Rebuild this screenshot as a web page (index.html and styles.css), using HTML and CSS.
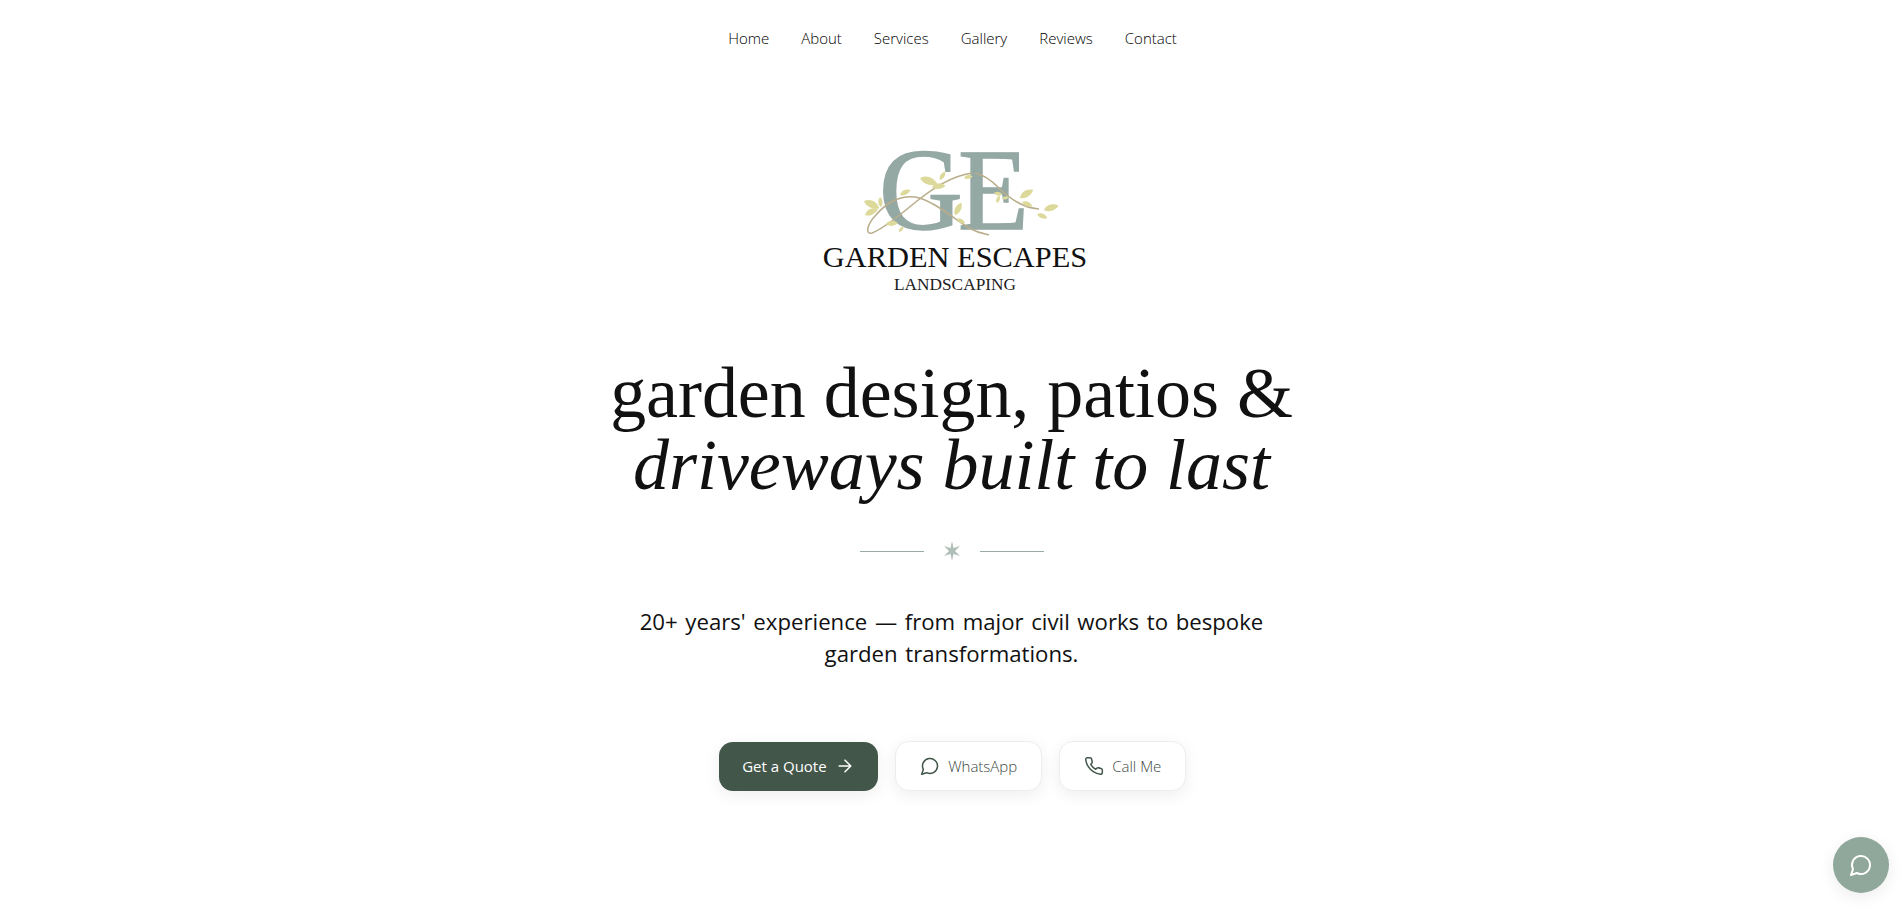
FILE: index.html
```html
<!DOCTYPE html>
<html lang="en">
<head>
<meta charset="utf-8">
<title>Garden Escapes Landscaping</title>
<link rel="stylesheet" href="styles.css">
</head>
<body>
<nav class="nav">
  <a href="#">Home</a><a href="#">About</a><a href="#">Services</a><a href="#">Gallery</a><a href="#">Reviews</a><a href="#">Contact</a>
</nav>
<main class="hero">
  <svg class="logo" viewBox="0 0 300 170" width="300" height="170" role="img" aria-label="Garden Escapes Landscaping">
    <defs>
      <path id="leaf" d="M0 0C5-6 14-6 20 0C14 5 5 5 0 0Z"/>
    </defs>
    <text class="mono" x="77" y="94" letter-spacing="-4.700">GE</text>
    <g class="vine">
      <path d="M170 38C150 41 132 52 110 70C92 85 78 95 70 98C62 100 66 88 74 80C84 68 98 60 113 62C130 65 150 82 167 93C176 98 182 99 187 100"/>
      <path d="M173 38C183 40 190 46 197 53C208 64 222 73 237 74"/>
    </g>
    <g class="leaves">
      <use href="#leaf" transform="translate(62 66) rotate(25) scale(.85)"/>
      <use href="#leaf" transform="translate(79 72) rotate(-95) scale(.5)"/>
      <use href="#leaf" transform="translate(63 80) rotate(-25) scale(.72)"/>
      <use href="#leaf" transform="translate(84 89) rotate(-5) scale(.6)"/>
      <use href="#leaf" transform="translate(97 97) rotate(-50) scale(.36)"/>
      <use href="#leaf" transform="translate(118 43) rotate(20) scale(.92)"/>
      <use href="#leaf" transform="translate(138 45) rotate(-58) scale(.5)"/>
      <use href="#leaf" transform="translate(130 52) rotate(-5) scale(.68)"/>
      <use href="#leaf" transform="translate(98 60) rotate(-25) scale(.58)"/>
      <use href="#leaf" transform="translate(153 80) rotate(-62) scale(.7)"/>
      <use href="#leaf" transform="translate(155 84) rotate(28) scale(.46)"/>
      <use href="#leaf" transform="translate(162 43) rotate(-12) scale(.44)"/>
      <use href="#leaf" transform="translate(192 58) rotate(12) scale(.44)"/>
      <use href="#leaf" transform="translate(195 68) rotate(-72) scale(.4)"/>
      <use href="#leaf" transform="translate(200 64) rotate(-15) scale(.36)"/>
      <use href="#leaf" transform="translate(218 63) rotate(-32) scale(.78)"/>
      <use href="#leaf" transform="translate(220 67) rotate(22) scale(.56)"/>
      <use href="#leaf" transform="translate(242 75) rotate(-16) scale(.76)"/>
      <use href="#leaf" transform="translate(235 79) rotate(22) scale(.56)"/>
    </g>
    <text class="brand" x="153" y="132" text-anchor="middle">GARDEN ESCAPES</text>
    <text class="sub-brand" x="153" y="155" text-anchor="middle">LANDSCAPING</text>
  </svg>
  <h1 class="title">garden design, patios &amp;<br><em>driveways built to last</em></h1>
  <div class="divider">
    <span class="rule"></span>
    <svg class="star" viewBox="0 0 20 20" width="20" height="20"><path d="M10 0L11.500 7 18 5 13 10 18 15 11.500 13 10 20 8.500 13 2 15 7 10 2 5 8.500 7Z"/></svg>
    <span class="rule"></span>
  </div>
  <p class="lead">20+ years' experience — from major civil works to bespoke garden transformations.</p>
  <div class="actions">
    <a class="btn primary" href="#">Get a Quote
      <svg class="icon" viewBox="0 0 24 24"><path d="M5 12h14M12 5l7 7-7 7"/></svg>
    </a>
    <a class="btn ghost" href="#">
      <svg class="icon" viewBox="0 0 24 24"><path d="M7.900 20A9 9 0 1 0 4 16.100L2 22Z"/></svg>
      WhatsApp
    </a>
    <a class="btn ghost" href="#">
      <svg class="icon" viewBox="0 0 24 24"><path d="M22 16.920v3a2 2 0 0 1-2.180 2 19.790 19.790 0 0 1-8.630-3.070 19.500 19.500 0 0 1-6-6 19.790 19.790 0 0 1-3.070-8.670A2 2 0 0 1 4.110 2h3a2 2 0 0 1 2 1.720 12.840 12.840 0 0 0 .7 2.810 2 2 0 0 1-.45 2.110L8.090 9.910a16 16 0 0 0 6 6l1.270-1.270a2 2 0 0 1 2.110-.45 12.840 12.840 0 0 0 2.810.7A2 2 0 0 1 22 16.920Z"/></svg>
      Call Me
    </a>
  </div>
</main>
<button class="chat" type="button" aria-label="Open chat">
  <svg viewBox="0 0 24 24" width="24" height="24"><path d="M7.900 20A9 9 0 1 0 4 16.100L2 22Z"/></svg>
</button>
</body>
</html>
```

FILE: styles.css
```css
* { box-sizing: border-box; }
html, body { margin: 0; height: 100%; }
body {
  background: #fff;
  color: #111;
  font-family: "Open Sans", "Liberation Sans", sans-serif;
  overflow: hidden;
}
a { text-decoration: none; color: inherit; }

.nav {
  display: flex;
  justify-content: center;
  gap: 32px;
  padding: 27px 0 0 2px;
  height: 135px;
  font-size: 15px;
  line-height: 22px;
  font-weight: 300;
  color: #000;
}

.hero {
  display: flex;
  flex-direction: column;
  align-items: center;
}

.logo { display: block; overflow: visible; }
.mono { font-family: "Liberation Serif", serif; font-size: 116px; fill: #94a8a4; stroke: #94a8a4; stroke-width: 1.400; }
.vine path { fill: none; stroke: #b9ad8c; stroke-width: 1.600; }
.leaves { fill: #dcd99a; }
.brand { font-family: "Liberation Serif", serif; font-size: 30.400px; fill: #111; }
.sub-brand { font-family: "Liberation Serif", serif; font-size: 17.300px; fill: #222; }

.title {
  margin: 52px 0 0;
  font-family: "Liberation Serif", serif;
  font-size: 72px;
  line-height: 72px;
  font-weight: 400;
  text-align: center;
  color: #111;
  letter-spacing: -.05px;
}
.title em { font-style: italic; }

.divider {
  display: flex;
  align-items: center;
  gap: 18px;
  margin-top: 40px;
  height: 20px;
}
.rule { width: 64px; height: 1px; background: #9aaba3; }
.star { fill: #b0c0b8; }

.lead {
  margin: 45px 0 0;
  width: 672px;
  font-size: 22.200px;
  word-spacing: 1.850px;
  line-height: 32px;
  text-align: center;
  color: #111;
}

.actions {
  display: flex;
  align-items: center;
  gap: 17px;
  margin-top: 71px;
  padding-left: 2px;
}
.btn {
  display: flex;
  align-items: center;
  justify-content: center;
  gap: 8px;
  height: 50px;
  padding: 0 24px;
  border-radius: 14px;
  font-size: 15px;
  font-weight: 300;
  box-shadow: 0 4px 16px rgba(0, 0, 0, .07);
}
.primary { background: #43564a; color: #fff; height: 49px; font-weight: 400; padding: 0 23.500px; }
.ghost { background: #fff; border: 1px solid #eceeed; color: #3d4a43; }
.icon { width: 20px; height: 20px; fill: none; stroke: currentColor; stroke-width: 1.800; stroke-linecap: round; stroke-linejoin: round; }
.ghost .icon { stroke: #43564a; }

.chat {
  position: fixed;
  right: 14px;
  bottom: 16px;
  width: 56px;
  height: 56px;
  border: 0;
  border-radius: 50%;
  background: #8fa89b;
  display: flex;
  align-items: center;
  justify-content: center;
  box-shadow: 0 4px 16px rgba(0, 0, 0, .08);
}
.chat svg { fill: none; stroke: #fff; stroke-width: 2; stroke-linecap: round; stroke-linejoin: round; }
```
